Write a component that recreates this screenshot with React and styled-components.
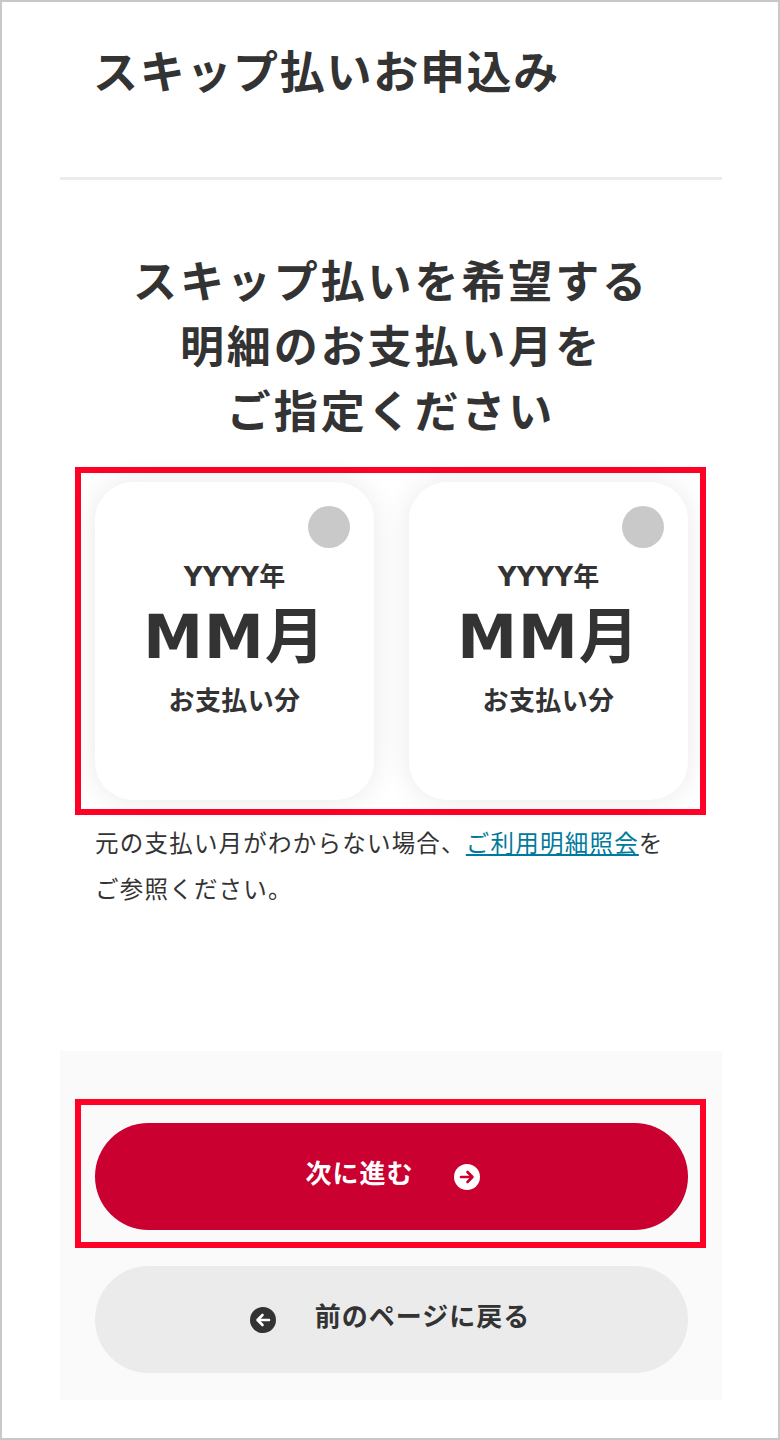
import React from "react";
import styled, { createGlobalStyle } from "styled-components";

const Global = createGlobalStyle`
  html, body { margin: 0; padding: 0; background: #fff; }
  * { box-sizing: border-box; }
`;

const jp = `"Noto Sans CJK JP", "Noto Sans", sans-serif`;
const mix = `"DejaVu Sans", "Noto Sans CJK JP", sans-serif`;

const Frame = styled.div`
  width: 780px;
  height: 1440px;
  border: 2px solid #c8c8c8;
  padding: 0 56px 0 58px;
  color: #333;
  font-family: ${jp};
  overflow: hidden;
`;
const Header = styled.header`
  height: 178px;
  padding: 36px 0 0 33px;
  border-bottom: 3px solid #ebebeb;
`;
const PageTitle = styled.h1`
  margin: 0;
  font-size: 45px;
  line-height: 64px;
  font-weight: 700;
  letter-spacing: 1.7px;
  white-space: nowrap;
`;
const Lead = styled.h2`
  margin: 67px 0 0;
  font-size: 44px;
  line-height: 65px;
  font-weight: 700;
  letter-spacing: 2.9px;
  text-align: center;
`;
const Highlight = styled.div`
  border: 6px solid #ff0026;
  margin-left: 15px;
  width: 631px;
`;
const CardsHighlight = styled(Highlight)`
  margin-top: 25px;
  height: 348px;
  padding: 9px 12px 9px 14px;
  display: flex;
  gap: 35px;
`;
const Card = styled.div`
  position: relative;
  flex: 1;
  height: 318px;
  border-radius: 38px;
  background: #fff;
  box-shadow: 0 0 30px rgba(0, 0, 0, 0.09);
  display: flex;
  flex-direction: column;
  align-items: center;
  padding-top: 75px;
  font-family: ${mix};
  font-weight: 700;
`;
const Radio = styled.span`
  position: absolute;
  top: 24px;
  right: 24px;
  width: 42px;
  height: 42px;
  border-radius: 50%;
  background: #c9c9c9;
`;
const Year = styled.div`
  font-size: 26px;
  line-height: 40px;
`;
const Month = styled.div`
  font-size: 60px;
  line-height: 78px;
  letter-spacing: 1px;
  padding-top: 1px;
`;
const Note = styled.div`
  font-size: 26px;
  line-height: 46px;
  margin-top: 2px;
  letter-spacing: 0.4px;
`;
const Help = styled.p`
  margin: 4px 0 0 35px;
  font-size: 23.5px;
  line-height: 46px;
  letter-spacing: 1.22px;
  color: #333;
  white-space: nowrap;
  a { color: #007a9c; text-decoration: underline; }
`;
const Footer = styled.div`
  margin-top: 140px;
  height: 349px;
  background: #fafafa;
  padding-top: 48px;
`;
const ButtonHighlight = styled(Highlight)`
  height: 149px;
  padding: 18px 12px 12px 14px;
`;
const Button = styled.button`
  display: flex;
  align-items: center;
  justify-content: center;
  gap: ${p => p.$gap}px;
  width: 593px;
  height: 107px;
  border: 0;
  border-radius: 54px;
  background: ${p => (p.$primary ? "#c90030" : "#ebebeb")};
  color: ${p => (p.$primary ? "#fff" : "#333")};
  font-family: ${jp};
  font-size: 26px;
  font-weight: 700;
  letter-spacing: 1px;
  padding: 0 ${p => p.$right || 0}px 0 ${p => p.$left || 0}px;
`;
const BackButton = styled(Button)`
  margin: 18px 0 0 35px;
`;
const Label = styled.span`
  position: relative;
  top: -5px;
`;
const Icon = styled.svg`
  width: 26px;
  height: 26px;
  flex: none;
`;

const Arrow = ({ dir, bg, fg }) => (
  <Icon viewBox="0 0 26 26">
    <circle cx="13" cy="13" r="13" fill={bg} />
    <path
      d={dir === "right" ? "M7 13h11M13.5 8l5 5-5 5" : "M19 13H8M12.5 8l-5 5 5 5"}
      fill="none"
      stroke={fg}
      strokeWidth="2.6"
      strokeLinecap="round"
      strokeLinejoin="round"
    />
  </Icon>
);

const MonthCard = () => (
  <Card>
    <Radio />
    <Year>YYYY年</Year>
    <Month>MM月</Month>
    <Note>お支払い分</Note>
  </Card>
);

export default function App() {
  return (
    <Frame>
      <Global />
      <Header>
        <PageTitle>スキップ払いお申込み</PageTitle>
      </Header>
      <Lead>
        スキップ払いを希望する
        <br />
        明細のお支払い月を
        <br />
        ご指定ください
      </Lead>
      <CardsHighlight>
        <MonthCard />
        <MonthCard />
      </CardsHighlight>
      <Help>
        元の支払い月がわからない場合、<a href="#">ご利用明細照会</a>を
        <br />
        ご参照ください。
      </Help>
      <Footer>
        <ButtonHighlight>
          <Button $primary $gap={40} $left={2}>
            <Label>次に進む</Label>
            <Arrow dir="right" bg="#fff" fg="#c90030" />
          </Button>
        </ButtonHighlight>
        <BackButton $gap={39} $right={3}>
          <Arrow dir="left" bg="#333" fg="#fff" />
          <Label>前のページに戻る</Label>
        </BackButton>
      </Footer>
    </Frame>
  );
}
